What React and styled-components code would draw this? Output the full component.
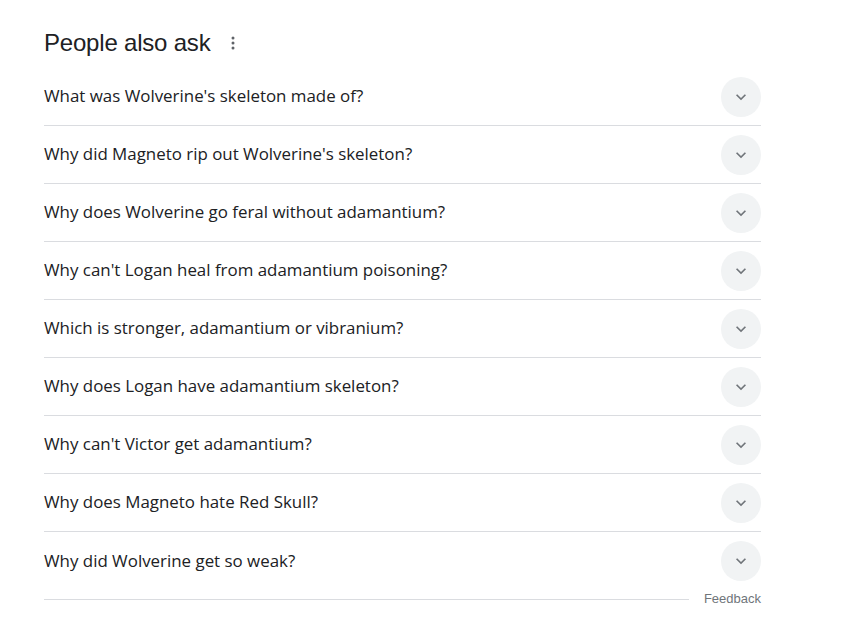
import React from 'react'
import styled, { createGlobalStyle } from 'styled-components'

const GlobalStyle = createGlobalStyle`
  body {
    margin: 0;
    background: #fff;
    font-family: "Liberation Sans", Arial, sans-serif;
  }
`

const questions = [
  "What was Wolverine's skeleton made of?",
  "Why did Magneto rip out Wolverine's skeleton?",
  "Why does Wolverine go feral without adamantium?",
  "Why can't Logan heal from adamantium poisoning?",
  "Which is stronger, adamantium or vibranium?",
  "Why does Logan have adamantium skeleton?",
  "Why can't Victor get adamantium?",
  "Why does Magneto hate Red Skull?",
  "Why did Wolverine get so weak?",
]

const Wrapper = styled.div`
  width: 717px;
  padding: 27px 0 0 44px;
`

const Header = styled.div`
  display: flex;
  align-items: center;
  height: 32px;
  margin-bottom: 9px;
`

const Title = styled.h2`
  margin: 0;
  font-size: 24px;
  font-weight: 400;
  color: #202124;
  letter-spacing: -0.2px;
`

const MoreButton = styled.span`
  display: flex;
  align-items: center;
  margin-left: 21px;
  color: #5f6368;
`

const List = styled.div`
  display: flex;
  flex-direction: column;
`

const Row = styled.div`
  display: flex;
  align-items: center;
  justify-content: space-between;
  height: 58px;
  border-bottom: ${(p) => (p.$last ? 'none' : '1px solid #dadce0')};
  box-sizing: border-box;
`

const Question = styled.span`
  font-family: "Open Sans", "Liberation Sans", sans-serif;
  font-size: 16.9px;
  color: #202124;
  line-height: 24px;
  margin-top: -1px;
`

const Toggle = styled.span`
  width: 40px;
  height: 40px;
  border-radius: 50%;
  background: #f1f3f4;
  display: flex;
  align-items: center;
  justify-content: center;
  color: #70757a;
`

const Footer = styled.div`
  display: flex;
  align-items: center;
`

const FooterLine = styled.div`
  flex: 1;
  height: 1px;
  background: #dadce0;
  margin-right: 15px;
  margin-top: 1px;
`

const Feedback = styled.span`
  font-size: 13px;
  color: #70757a;
  line-height: 16px;
  margin-top: 1px;
`

const Chevron = () => (
  <svg width="20" height="20" viewBox="0 0 24 24" fill="currentColor">
    <path d="M16.59 8.59 12 13.17 7.41 8.59 6 10l6 6 6-6z" />
  </svg>
)

const Dots = () => (
  <svg width="4" height="14" viewBox="0 0 4 14" fill="currentColor">
    <circle cx="2" cy="2" r="1.5" />
    <circle cx="2" cy="7" r="1.5" />
    <circle cx="2" cy="12" r="1.5" />
  </svg>
)

export default function App() {
  return (
    <>
      <GlobalStyle />
      <Wrapper>
        <Header>
          <Title>People also ask</Title>
          <MoreButton>
            <Dots />
          </MoreButton>
        </Header>
        <List>
          {questions.map((q, i) => (
            <Row key={q} $last={i === questions.length - 1}>
              <Question>{q}</Question>
              <Toggle>
                <Chevron />
              </Toggle>
            </Row>
          ))}
        </List>
        <Footer>
          <FooterLine />
          <Feedback>Feedback</Feedback>
        </Footer>
      </Wrapper>
    </>
  )
}
